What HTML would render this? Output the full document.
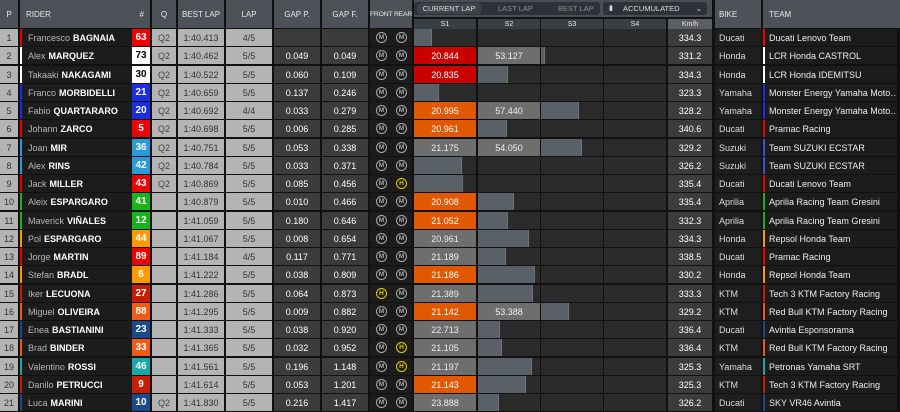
<!DOCTYPE html>
<html><head><meta charset="utf-8"><style>
*{margin:0;padding:0;box-sizing:border-box}
body{width:900px;height:412px;background:#111;font-family:"Liberation Sans",sans-serif;font-size:9px;color:#eee;position:relative;overflow:hidden}
.h{position:absolute;top:0;height:28px;background:#4d5259;color:#e8e8e8;font-size:8px;display:flex;align-items:center;justify-content:center;white-space:nowrap}
.r{position:absolute;left:0;width:900px;height:17px}
.r>div{position:absolute;top:0;height:17px;display:flex;align-items:center;justify-content:center;overflow:hidden;white-space:nowrap}
.p{left:0;width:18px;background:#b4b4b4;color:#333}
.rd{left:20px;width:112px;background:#1c1c1c;justify-content:flex-start!important;padding-left:6px;color:#b8b8b8;border-left:2px solid #000}
.rd b{color:#fff;margin-left:3px}
.nb{left:132px;width:18px;color:#fff;font-weight:bold;font-size:10px}
.q{left:152px;width:24px;background:#b4b4b4;color:#444}
.bl{left:178px;width:46px;background:#b4b4b4;color:#333}
.lp{left:226px;width:46px;background:#b4b4b4;color:#333}
.gp{left:274px;width:46px;background:#3c3c3c;color:#fff}
.gf{left:322px;width:46px;background:#3c3c3c;color:#fff}
.ty{left:370px;width:42px;background:#1c1c1c}
.t{position:absolute;top:3px;width:11px;height:11px;border:1.3px solid #aaa;border-radius:50%;color:#aaa;font-size:6.5px;font-weight:bold;display:flex;align-items:center;justify-content:center}
.t.f{left:6px}.t.b{left:26px}.t.H{border-color:#e4d000;color:#e4d000}
.s{background:#2b2b2b;justify-content:center}
.s1{left:414px;width:62px}.s2{left:478px;width:62px}.s3{left:541px;width:62px}.s4{left:604px;width:62px}
.s i{position:absolute;left:0;top:0;height:17px;background:#5a6068;border-right:1px solid #6c737b}
.R{background:#c80000!important;color:#fff}.O{background:#e05800!important;color:#fff}.G{background:#6e6e6e!important;color:#eee}
.km{left:668px;width:44px;background:#3c3c3c;color:#fff}
.bk{left:715px;width:46px;background:#1e1e1e;justify-content:flex-start!important;padding-left:4px;color:#ddd}
.tm{left:763px;width:134px;background:#1c1c1c;justify-content:flex-start!important;padding-left:4px;color:#eee;border-left:2px solid #000}
</style></head><body>
<div class="h" style="left:0;width:18px">P</div>
<div class="h" style="left:20px;width:130px;justify-content:space-between;padding:0 6px">RIDER<span>#</span></div>
<div class="h" style="left:152px;width:24px">Q</div>
<div class="h" style="left:178px;width:46px">BEST LAP</div>
<div class="h" style="left:226px;width:46px">LAP</div>
<div class="h" style="left:274px;width:46px">GAP P.</div>
<div class="h" style="left:322px;width:46px">GAP F.</div>
<div class="h" style="left:370px;width:42px;font-size:6.8px;letter-spacing:-0.2px">FRONT REAR</div>
<div class="h" style="left:414px;width:298px;height:17px;background:#4a4f56"></div>
<div style="position:absolute;left:414px;top:2px;width:186px;height:13px;background:#2e3238;border-radius:3px;font-size:7.5px;color:#8a8f96">
<div style="position:absolute;left:3px;top:1px;width:64px;height:11px;background:#3e434a;border-radius:3px;color:#ddd;text-align:center;line-height:11px">CURRENT LAP</div>
<div style="position:absolute;left:84px;top:1px;line-height:11px">LAST LAP</div>
<div style="position:absolute;left:144px;top:1px;line-height:11px">BEST LAP</div></div>
<div style="position:absolute;left:603px;top:2px;width:104px;height:13px;background:#2e3238;border-radius:3px;font-size:7.5px;color:#ddd;line-height:13px;padding-left:20px">ACCUMULATED<span style="position:absolute;left:6px;top:0;font-size:7px">▮</span><span style="position:absolute;right:5px;top:0">⌄</span></div>
<div class="h" style="left:414px;top:19px;height:10px;width:62px;background:#3a3f46;font-size:7px">S1</div>
<div class="h" style="left:478px;top:19px;height:10px;width:62px;background:#3a3f46;font-size:7px">S2</div>
<div class="h" style="left:541px;top:19px;height:10px;width:62px;background:#3a3f46;font-size:7px">S3</div>
<div class="h" style="left:604px;top:19px;height:10px;width:62px;background:#3a3f46;font-size:7px">S4</div>
<div class="h" style="left:668px;top:19px;height:10px;width:44px;background:#5a5f66;font-size:7px">Km/h</div>
<div class="h" style="left:715px;width:46px;justify-content:flex-start;padding-left:4px">BIKE</div>
<div class="h" style="left:763px;width:137px;justify-content:flex-start;padding-left:6px">TEAM</div>

<div class="r" style="top:29px"><div class="p">1</div><div class="rd" style="border-left-color:#e00">Francesco<b>BAGNAIA</b></div><div class="nb" style="background:#e00">63</div><div class="q">Q2</div><div class="bl">1:40.413</div><div class="lp">4/5</div><div class="gp"></div><div class="gf"></div><div class="ty"><span class="t f">M</span><span class="t b">M</span></div><div class="s s1"><i style="width:18px"></i></div><div class="s s2"></div><div class="s s3"></div><div class="s s4"></div><div class="km">334.3</div><div class="bk">Ducati</div><div class="tm" style="border-left-color:#e00">Ducati Lenovo Team</div></div>
<div class="r" style="top:47px"><div class="p">2</div><div class="rd" style="border-left-color:#fff">Alex<b>MARQUEZ</b></div><div class="nb" style="background:#fff;color:#000">73</div><div class="q">Q2</div><div class="bl">1:40.462</div><div class="lp">5/5</div><div class="gp">0.049</div><div class="gf">0.049</div><div class="ty"><span class="t f">M</span><span class="t b">M</span></div><div class="s s1 R">20.844</div><div class="s s2 G">53.127</div><div class="s s3"><i style="width:4px"></i></div><div class="s s4"></div><div class="km">331.2</div><div class="bk">Honda</div><div class="tm" style="border-left-color:#fff">LCR Honda CASTROL</div></div>
<div class="r" style="top:66px"><div class="p">3</div><div class="rd" style="border-left-color:#fff">Takaaki<b>NAKAGAMI</b></div><div class="nb" style="background:#fff;color:#000">30</div><div class="q">Q2</div><div class="bl">1:40.522</div><div class="lp">5/5</div><div class="gp">0.060</div><div class="gf">0.109</div><div class="ty"><span class="t f">M</span><span class="t b">M</span></div><div class="s s1 R">20.835</div><div class="s s2"><i style="width:30px"></i></div><div class="s s3"></div><div class="s s4"></div><div class="km">334.3</div><div class="bk">Honda</div><div class="tm" style="border-left-color:#fff">LCR Honda IDEMITSU</div></div>
<div class="r" style="top:84px"><div class="p">4</div><div class="rd" style="border-left-color:#1a2ee0">Franco<b>MORBIDELLI</b></div><div class="nb" style="background:#1a2ee0">21</div><div class="q">Q2</div><div class="bl">1:40.659</div><div class="lp">5/5</div><div class="gp">0.137</div><div class="gf">0.246</div><div class="ty"><span class="t f">M</span><span class="t b">M</span></div><div class="s s1"><i style="width:25px"></i></div><div class="s s2"></div><div class="s s3"></div><div class="s s4"></div><div class="km">323.3</div><div class="bk">Yamaha</div><div class="tm" style="border-left-color:#1a2ee0">Monster Energy Yamaha Moto…</div></div>
<div class="r" style="top:102px"><div class="p">5</div><div class="rd" style="border-left-color:#1a2ee0">Fabio<b>QUARTARARO</b></div><div class="nb" style="background:#1a2ee0">20</div><div class="q">Q2</div><div class="bl">1:40.692</div><div class="lp">4/4</div><div class="gp">0.033</div><div class="gf">0.279</div><div class="ty"><span class="t f">M</span><span class="t b">M</span></div><div class="s s1 O">20.995</div><div class="s s2 G">57.440</div><div class="s s3"><i style="width:38px"></i></div><div class="s s4"></div><div class="km">328.2</div><div class="bk">Yamaha</div><div class="tm" style="border-left-color:#1a2ee0">Monster Energy Yamaha Moto…</div></div>
<div class="r" style="top:120px"><div class="p">6</div><div class="rd" style="border-left-color:#e00">Johann<b>ZARCO</b></div><div class="nb" style="background:#e00">5</div><div class="q">Q2</div><div class="bl">1:40.698</div><div class="lp">5/5</div><div class="gp">0.006</div><div class="gf">0.285</div><div class="ty"><span class="t f">M</span><span class="t b">M</span></div><div class="s s1 O">20.961</div><div class="s s2"><i style="width:29px"></i></div><div class="s s3"></div><div class="s s4"></div><div class="km">340.6</div><div class="bk">Ducati</div><div class="tm" style="border-left-color:#e00">Pramac Racing</div></div>
<div class="r" style="top:139px"><div class="p">7</div><div class="rd" style="border-left-color:#2a9ad8">Joan<b>MIR</b></div><div class="nb" style="background:#2a9ad8">36</div><div class="q">Q2</div><div class="bl">1:40.751</div><div class="lp">5/5</div><div class="gp">0.053</div><div class="gf">0.338</div><div class="ty"><span class="t f">M</span><span class="t b">M</span></div><div class="s s1 G">21.175</div><div class="s s2 G">54.050</div><div class="s s3"><i style="width:41px"></i></div><div class="s s4"></div><div class="km">329.2</div><div class="bk">Suzuki</div><div class="tm" style="border-left-color:#2a5ad8">Team SUZUKI ECSTAR</div></div>
<div class="r" style="top:157px"><div class="p">8</div><div class="rd" style="border-left-color:#2a9ad8">Alex<b>RINS</b></div><div class="nb" style="background:#2a9ad8">42</div><div class="q">Q2</div><div class="bl">1:40.784</div><div class="lp">5/5</div><div class="gp">0.033</div><div class="gf">0.371</div><div class="ty"><span class="t f">M</span><span class="t b">M</span></div><div class="s s1"><i style="width:48px"></i></div><div class="s s2"></div><div class="s s3"></div><div class="s s4"></div><div class="km">326.2</div><div class="bk">Suzuki</div><div class="tm" style="border-left-color:#2a5ad8">Team SUZUKI ECSTAR</div></div>
<div class="r" style="top:175px"><div class="p">9</div><div class="rd" style="border-left-color:#e00">Jack<b>MILLER</b></div><div class="nb" style="background:#e00">43</div><div class="q">Q2</div><div class="bl">1:40.869</div><div class="lp">5/5</div><div class="gp">0.085</div><div class="gf">0.456</div><div class="ty"><span class="t f">M</span><span class="t b H">H</span></div><div class="s s1"><i style="width:49px"></i></div><div class="s s2"></div><div class="s s3"></div><div class="s s4"></div><div class="km">335.4</div><div class="bk">Ducati</div><div class="tm" style="border-left-color:#e00">Ducati Lenovo Team</div></div>
<div class="r" style="top:193px"><div class="p">10</div><div class="rd" style="border-left-color:#1ab41a">Aleix<b>ESPARGARO</b></div><div class="nb" style="background:#1ab41a">41</div><div class="q"></div><div class="bl">1:40.879</div><div class="lp">5/5</div><div class="gp">0.010</div><div class="gf">0.466</div><div class="ty"><span class="t f">M</span><span class="t b">M</span></div><div class="s s1 O">20.908</div><div class="s s2"><i style="width:36px"></i></div><div class="s s3"></div><div class="s s4"></div><div class="km">335.4</div><div class="bk">Aprilia</div><div class="tm" style="border-left-color:#1ab41a">Aprilia Racing Team Gresini</div></div>
<div class="r" style="top:212px"><div class="p">11</div><div class="rd" style="border-left-color:#1ab41a">Maverick<b>VIÑALES</b></div><div class="nb" style="background:#1ab41a">12</div><div class="q"></div><div class="bl">1:41.059</div><div class="lp">5/5</div><div class="gp">0.180</div><div class="gf">0.646</div><div class="ty"><span class="t f">M</span><span class="t b">M</span></div><div class="s s1 O">21.052</div><div class="s s2"><i style="width:30px"></i></div><div class="s s3"></div><div class="s s4"></div><div class="km">332.3</div><div class="bk">Aprilia</div><div class="tm" style="border-left-color:#1ab41a">Aprilia Racing Team Gresini</div></div>
<div class="r" style="top:230px"><div class="p">12</div><div class="rd" style="border-left-color:#f90">Pol<b>ESPARGARO</b></div><div class="nb" style="background:#f90">44</div><div class="q"></div><div class="bl">1:41.067</div><div class="lp">5/5</div><div class="gp">0.008</div><div class="gf">0.654</div><div class="ty"><span class="t f">M</span><span class="t b">M</span></div><div class="s s1 G">20.961</div><div class="s s2"><i style="width:51px"></i></div><div class="s s3"></div><div class="s s4"></div><div class="km">334.3</div><div class="bk">Honda</div><div class="tm" style="border-left-color:#f90">Repsol Honda Team</div></div>
<div class="r" style="top:248px"><div class="p">13</div><div class="rd" style="border-left-color:#e00">Jorge<b>MARTIN</b></div><div class="nb" style="background:#e00">89</div><div class="q"></div><div class="bl">1:41.184</div><div class="lp">4/5</div><div class="gp">0.117</div><div class="gf">0.771</div><div class="ty"><span class="t f">M</span><span class="t b">M</span></div><div class="s s1 G">21.189</div><div class="s s2"><i style="width:28px"></i></div><div class="s s3"></div><div class="s s4"></div><div class="km">338.5</div><div class="bk">Ducati</div><div class="tm" style="border-left-color:#e00">Pramac Racing</div></div>
<div class="r" style="top:266px"><div class="p">14</div><div class="rd" style="border-left-color:#f90">Stefan<b>BRADL</b></div><div class="nb" style="background:#f90">6</div><div class="q"></div><div class="bl">1:41.222</div><div class="lp">5/5</div><div class="gp">0.038</div><div class="gf">0.809</div><div class="ty"><span class="t f">M</span><span class="t b">M</span></div><div class="s s1 O">21.186</div><div class="s s2"><i style="width:57px"></i></div><div class="s s3"></div><div class="s s4"></div><div class="km">330.2</div><div class="bk">Honda</div><div class="tm" style="border-left-color:#f90">Repsol Honda Team</div></div>
<div class="r" style="top:285px"><div class="p">15</div><div class="rd" style="border-left-color:#c81e00">Iker<b>LECUONA</b></div><div class="nb" style="background:#c81e00">27</div><div class="q"></div><div class="bl">1:41.286</div><div class="lp">5/5</div><div class="gp">0.064</div><div class="gf">0.873</div><div class="ty"><span class="t f H">H</span><span class="t b">M</span></div><div class="s s1 G">21.389</div><div class="s s2"><i style="width:55px"></i></div><div class="s s3"></div><div class="s s4"></div><div class="km">333.3</div><div class="bk">KTM</div><div class="tm" style="border-left-color:#c81e00">Tech 3 KTM Factory Racing</div></div>
<div class="r" style="top:303px"><div class="p">16</div><div class="rd" style="border-left-color:#f05a14">Miguel<b>OLIVEIRA</b></div><div class="nb" style="background:#f05a14">88</div><div class="q"></div><div class="bl">1:41.295</div><div class="lp">5/5</div><div class="gp">0.009</div><div class="gf">0.882</div><div class="ty"><span class="t f">M</span><span class="t b">M</span></div><div class="s s1 O">21.142</div><div class="s s2 G">53.388</div><div class="s s3"><i style="width:28px"></i></div><div class="s s4"></div><div class="km">329.2</div><div class="bk">KTM</div><div class="tm" style="border-left-color:#f05a14">Red Bull KTM Factory Racing</div></div>
<div class="r" style="top:321px"><div class="p">17</div><div class="rd" style="border-left-color:#1a4a8a">Enea<b>BASTIANINI</b></div><div class="nb" style="background:#1a4a8a">23</div><div class="q"></div><div class="bl">1:41.333</div><div class="lp">5/5</div><div class="gp">0.038</div><div class="gf">0.920</div><div class="ty"><span class="t f">M</span><span class="t b">M</span></div><div class="s s1 G">22.713</div><div class="s s2"><i style="width:22px"></i></div><div class="s s3"></div><div class="s s4"></div><div class="km">336.4</div><div class="bk">Ducati</div><div class="tm" style="border-left-color:#1a4a8a">Avintia Esponsorama</div></div>
<div class="r" style="top:339px"><div class="p">18</div><div class="rd" style="border-left-color:#f05a14">Brad<b>BINDER</b></div><div class="nb" style="background:#f05a14">33</div><div class="q"></div><div class="bl">1:41.365</div><div class="lp">5/5</div><div class="gp">0.032</div><div class="gf">0.952</div><div class="ty"><span class="t f">M</span><span class="t b H">H</span></div><div class="s s1 G">21.105</div><div class="s s2"><i style="width:24px"></i></div><div class="s s3"></div><div class="s s4"></div><div class="km">336.4</div><div class="bk">KTM</div><div class="tm" style="border-left-color:#f05a14">Red Bull KTM Factory Racing</div></div>
<div class="r" style="top:358px"><div class="p">19</div><div class="rd" style="border-left-color:#18a8a8">Valentino<b>ROSSI</b></div><div class="nb" style="background:#18a8a8">46</div><div class="q"></div><div class="bl">1:41.561</div><div class="lp">5/5</div><div class="gp">0.196</div><div class="gf">1.148</div><div class="ty"><span class="t f">M</span><span class="t b H">H</span></div><div class="s s1 G">21.197</div><div class="s s2"><i style="width:54px"></i></div><div class="s s3"></div><div class="s s4"></div><div class="km">325.3</div><div class="bk">Yamaha</div><div class="tm" style="border-left-color:#18a8a8">Petronas Yamaha SRT</div></div>
<div class="r" style="top:376px"><div class="p">20</div><div class="rd" style="border-left-color:#c81e00">Danilo<b>PETRUCCI</b></div><div class="nb" style="background:#c81e00">9</div><div class="q"></div><div class="bl">1:41.614</div><div class="lp">5/5</div><div class="gp">0.053</div><div class="gf">1.201</div><div class="ty"><span class="t f">M</span><span class="t b">M</span></div><div class="s s1 O">21.143</div><div class="s s2"><i style="width:48px"></i></div><div class="s s3"></div><div class="s s4"></div><div class="km">325.3</div><div class="bk">KTM</div><div class="tm" style="border-left-color:#c81e00">Tech 3 KTM Factory Racing</div></div>
<div class="r" style="top:394px"><div class="p">21</div><div class="rd" style="border-left-color:#1a4a8a">Luca<b>MARINI</b></div><div class="nb" style="background:#1a4a8a">10</div><div class="q">Q2</div><div class="bl">1:41.830</div><div class="lp">5/5</div><div class="gp">0.216</div><div class="gf">1.417</div><div class="ty"><span class="t f">M</span><span class="t b">M</span></div><div class="s s1 G">23.888</div><div class="s s2"><i style="width:21px"></i></div><div class="s s3"></div><div class="s s4"></div><div class="km">326.2</div><div class="bk">Ducati</div><div class="tm" style="border-left-color:#1a4a8a">SKY VR46 Avintia</div></div>
</body></html>
